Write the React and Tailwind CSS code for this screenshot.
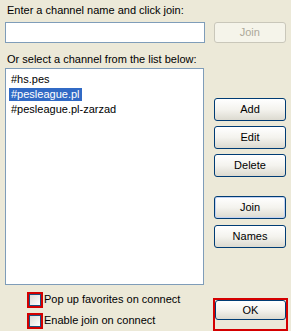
import React from 'react';

const font = { fontFamily: '"Liberation Sans", Arial, sans-serif' };

const XpButton = ({ children, disabled, className = '' }) => (
  <button
    type="button"
    className={`flex items-center justify-center rounded-[3px] border text-[11px] ${
      disabled
        ? 'border-[#C9C7BA] bg-[#F5F4EA] text-[#ACA899]'
        : 'border-[#003C74] bg-gradient-to-b from-white via-[#F4F3EE] to-[#DCDAD0] text-black'
    } ${className}`}
  >
    {children}
  </button>
);

const CheckRow = ({ label }) => (
  <div className="flex items-center h-[21px]">
    <div className="w-[16px] h-[16px] border-2 border-[#D40000] flex items-center justify-center">
      <div className="w-[12px] h-[12px] border border-[#1C5180] bg-gradient-to-br from-[#DCDCD7] to-white" />
    </div>
    <span className="ml-[1px] text-[11px] text-black">{label}</span>
  </div>
);

const channels = ['#hs.pes', '#pesleague.pl', '#pesleague.pl-zarzad'];

export default function App() {
  return (
    <div className="w-[291px] h-[331px] bg-[#ECE9D8] overflow-hidden px-[5px] pt-[4px]" style={font}>
      <div className="text-[11px] leading-[13px] text-black pl-[2px]">Enter a channel name and click join:</div>
      <div className="flex mt-[5px]">
        <div className="w-[201px] h-[21px] border border-[#7F9DB9] bg-white" />
        <XpButton disabled className="ml-[9px] w-[73px] h-[21px]">Join</XpButton>
      </div>
      <div className="text-[11px] leading-[13px] text-black pl-[2px] mt-[10px]">Or select a channel from the list below:</div>
      <div className="flex mt-[2px]">
        <div className="w-[201px] h-[217px] border border-[#7F9DB9] bg-white pt-[3px] pl-[3px]">
          {channels.map((c, i) => (
            <div key={c} className="h-[15px] flex items-center">
              <span
                className={`text-[11px] leading-[13px] px-[2px] ${
                  i === 1 ? 'bg-[#316AC5] text-white' : 'text-black'
                }`}
              >
                {c}
              </span>
            </div>
          ))}
        </div>
        <div className="ml-[10px] flex flex-col pt-[30px]">
          <XpButton className="w-[72px] h-[23px]">Add</XpButton>
          <XpButton className="w-[72px] h-[23px] mt-[5px]">Edit</XpButton>
          <XpButton className="w-[72px] h-[23px] mt-[5px]">Delete</XpButton>
          <XpButton className="w-[72px] h-[23px] mt-[19px] shadow-[inset_0_0_0_1px_#C2D2F2]">Join</XpButton>
          <XpButton className="w-[72px] h-[23px] mt-[6px]">Names</XpButton>
        </div>
      </div>
      <div className="flex mt-[4px]">
        <div className="ml-[22px] flex flex-col">
          <CheckRow label="Pop up favorites on connect" />
          <CheckRow label="Enable join on connect" />
        </div>
        <div className="ml-auto mt-[9px] mr-[-2px] border-2 border-[#D40000]">
          <XpButton className="w-[71px] h-[20px]">OK</XpButton>
        </div>
      </div>
    </div>
  );
}
